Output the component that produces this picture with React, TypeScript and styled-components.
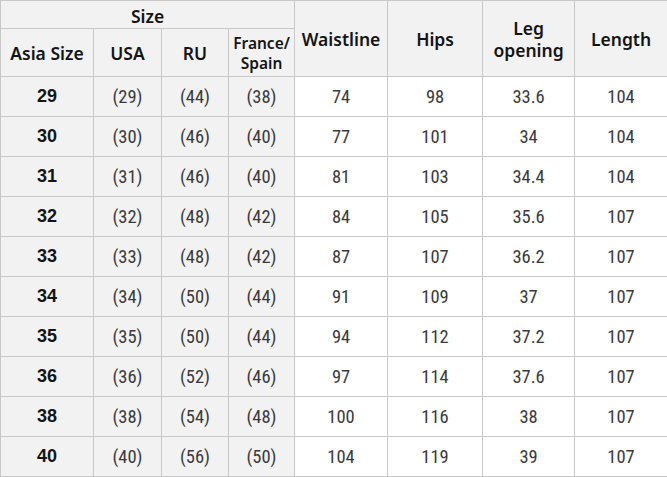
import styled, { createGlobalStyle } from "styled-components";

const GlobalStyle = createGlobalStyle`
  html, body {
    margin: 0;
    padding: 0;
    background: #ffffff;
  }
`;

interface SizeRow {
  asia: string;
  usa: string;
  ru: string;
  eu: string;
  waist: string;
  hips: string;
  leg: string;
  length: string;
}

const rows: SizeRow[] = [
  { asia: "29", usa: "(29)", ru: "(44)", eu: "(38)", waist: "74", hips: "98", leg: "33.6", length: "104" },
  { asia: "30", usa: "(30)", ru: "(46)", eu: "(40)", waist: "77", hips: "101", leg: "34", length: "104" },
  { asia: "31", usa: "(31)", ru: "(46)", eu: "(40)", waist: "81", hips: "103", leg: "34.4", length: "104" },
  { asia: "32", usa: "(32)", ru: "(48)", eu: "(42)", waist: "84", hips: "105", leg: "35.6", length: "107" },
  { asia: "33", usa: "(33)", ru: "(48)", eu: "(42)", waist: "87", hips: "107", leg: "36.2", length: "107" },
  { asia: "34", usa: "(34)", ru: "(50)", eu: "(44)", waist: "91", hips: "109", leg: "37", length: "107" },
  { asia: "35", usa: "(35)", ru: "(50)", eu: "(44)", waist: "94", hips: "112", leg: "37.2", length: "107" },
  { asia: "36", usa: "(36)", ru: "(52)", eu: "(46)", waist: "97", hips: "114", leg: "37.6", length: "107" },
  { asia: "38", usa: "(38)", ru: "(54)", eu: "(48)", waist: "100", hips: "116", leg: "38", length: "107" },
  { asia: "40", usa: "(40)", ru: "(56)", eu: "(50)", waist: "104", hips: "119", leg: "39", length: "107" },
];

const colWidths = [93, 68, 67, 66, 93, 95, 92, 93];

export default function App() {
  return (
    <>
      <GlobalStyle />
      <Table>
        <colgroup>
          {colWidths.map((w, i) => (
            <col key={i} style={{ width: w }} />
          ))}
        </colgroup>
        <thead>
          <TopRow>
            <Head colSpan={4} $top>
              Size
            </Head>
            <Head rowSpan={2}>Waistline</Head>
            <Head rowSpan={2}>Hips</Head>
            <Head rowSpan={2}>
              Leg
              <br />
              opening
            </Head>
            <Head rowSpan={2}>Length</Head>
          </TopRow>
          <SubRow>
            <Head>Asia Size</Head>
            <Head>USA</Head>
            <Head>RU</Head>
            <Head $small>
              France/
              <br />
              Spain
            </Head>
          </SubRow>
        </thead>
        <tbody>
          {rows.map((r) => (
            <DataRow key={r.asia}>
              <Cell $shade $bold>{r.asia}</Cell>
              <Cell $shade>{r.usa}</Cell>
              <Cell $shade>{r.ru}</Cell>
              <Cell $shade>{r.eu}</Cell>
              <Cell>{r.waist}</Cell>
              <Cell>{r.hips}</Cell>
              <Cell>{r.leg}</Cell>
              <Cell>{r.length}</Cell>
            </DataRow>
          ))}
        </tbody>
      </Table>
    </>
  );
}

const Table = styled.table`
  width: 667px;
  border-collapse: collapse;
  table-layout: fixed;
`;

const TopRow = styled.tr`
  height: 28px;
`;

const SubRow = styled.tr`
  height: 48px;
`;

const DataRow = styled.tr`
  height: 40px;
`;

const Head = styled.th<{ $small?: boolean; $top?: boolean }>`
  border: 1px solid #c8c8c8;
  background: #f2f2f2;
  color: #141414;
  font-family: "Noto Sans", "Noto Sans CJK SC", sans-serif;
  font-weight: 600;
  font-size: ${(p) => (p.$small ? "15.5px" : "17.5px")};
  line-height: ${(p) => (p.$small ? "20px" : "22px")};
  text-align: center;
  vertical-align: middle;
  padding: ${(p) => (p.$top ? "3px 0 0" : "0")};
`;

const Cell = styled.td<{ $shade?: boolean; $bold?: boolean }>`
  border: 1px solid #c8c8c8;
  background: ${(p) => (p.$shade ? "#f2f2f2" : "#ffffff")};
  color: ${(p) => (p.$bold ? "#141414" : "#3a3a3a")};
  font-family: ${(p) =>
    p.$bold
      ? `"Liberation Sans", Arial, sans-serif`
      : `"Roboto Condensed", "Liberation Sans Narrow", "Liberation Sans", sans-serif`};
  font-weight: ${(p) => (p.$bold ? 700 : 400)};
  font-size: ${(p) => (p.$bold ? "18px" : "18.5px")};
  text-align: center;
  vertical-align: middle;
  padding: 0;
`;
